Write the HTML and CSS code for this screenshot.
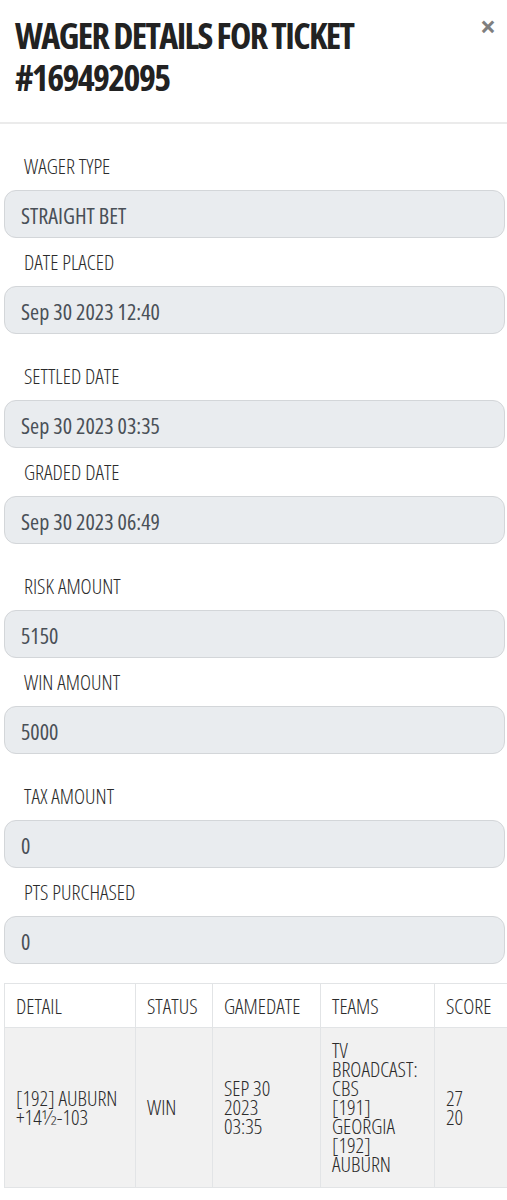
FILE: index.html
```html
<!DOCTYPE html>
<html lang="en">
<head>
    <meta charset="UTF-8">
    <meta name="viewport" content="width=device-width, initial-scale=1.0">
    <title>Wager Details</title>
    <link rel="stylesheet" href="styles.css">
</head>
<body>
    <div class="modal">
        <div class="modal-header">
            <h4 class="modal-title">WAGER DETAILS FOR TICKET<br>#169492095</h4>
            <button class="close" type="button">&times;</button>
        </div>

        <div class="modal-body">
            <div class="group">
                <label class="field-label">WAGER TYPE</label>
                <div class="form-control">STRAIGHT BET</div>
                <label class="field-label">DATE PLACED</label>
                <div class="form-control">Sep 30 2023 12:40</div>
            </div>
            <div class="group">
                <label class="field-label">SETTLED DATE</label>
                <div class="form-control">Sep 30 2023 03:35</div>
                <label class="field-label">GRADED DATE</label>
                <div class="form-control">Sep 30 2023 06:49</div>
            </div>
            <div class="group">
                <label class="field-label">RISK AMOUNT</label>
                <div class="form-control">5150</div>
                <label class="field-label">WIN AMOUNT</label>
                <div class="form-control">5000</div>
            </div>
            <div class="group">
                <label class="field-label">TAX AMOUNT</label>
                <div class="form-control">0</div>
                <label class="field-label">PTS PURCHASED</label>
                <div class="form-control">0</div>
            </div>

            <table class="wager-table">
                <colgroup>
                    <col class="col-detail">
                    <col class="col-status">
                    <col class="col-date">
                    <col class="col-teams">
                    <col class="col-score">
                </colgroup>
                <thead>
                    <tr>
                        <th>DETAIL</th>
                        <th>STATUS</th>
                        <th>GAMEDATE</th>
                        <th>TEAMS</th>
                        <th>SCORE</th>
                    </tr>
                </thead>
                <tbody>
                    <tr>
                        <td>[192] AUBURN<br>+14½-103</td>
                        <td>WIN</td>
                        <td>SEP 30<br>2023<br>03:35</td>
                        <td>TV<br>BROADCAST:<br>CBS<br>[191]<br>GEORGIA<br>[192]<br>AUBURN</td>
                        <td>27<br>20</td>
                    </tr>
                </tbody>
            </table>
        </div>
    </div>
</body>
</html>
```

FILE: styles.css
```css
* {
    box-sizing: border-box;
}

body {
    margin: 0;
    background: #fff;
    color: #333;
    font-family: "Open Sans", "Roboto", sans-serif;
    font-stretch: 75%;
    overflow-x: hidden;
}

/* Cabecera */
.modal-header {
    display: flex;
    justify-content: space-between;
    align-items: flex-start;
    padding: 15px 11px 23px 15px;
    border-bottom: 2px solid #ebebeb;
}

.modal-title {
    margin: 0;
    font-size: 36px;
    font-weight: 700;
    line-height: 42px;
    letter-spacing: -1.6px;
    color: #222;
}

.close {
    margin-top: 1px;
    padding: 0;
    border: none;
    background: none;
    font-family: inherit;
    font-stretch: 100%;
    font-size: 28px;
    font-weight: 700;
    line-height: 20px;
    color: #7f7f7f;
}

/* Campos */
.modal-body {
    padding: 18px 2px 40px 4px;
}

.group {
    margin-bottom: 30px;
}

.group:last-of-type {
    margin-bottom: 19px;
}

.field-label {
    display: block;
    margin: 12px 0 12px 20px;
    font-size: 21px;
    font-weight: 300;
    line-height: 24px;
    color: #2b2b2b;
}

.form-control {
    display: flex;
    align-items: center;
    height: 48px;
    padding: 2px 16px 0;
    background: #e9ecef;
    border: 1px solid #d3d6d9;
    border-radius: 12px;
    font-size: 22px;
    color: #495057;
}

/* Tabla */
.wager-table {
    width: 510px;
    table-layout: fixed;
    border-collapse: collapse;
    font-size: 21px;
    font-weight: 300;
    color: #2b2b2b;
}

.col-detail { width: 131px; }
.col-status { width: 77px; }
.col-date { width: 108px; }
.col-teams { width: 114px; }
.col-score { width: 80px; }

.wager-table th,
.wager-table td {
    border: 1px solid #e2e4e6;
    padding: 13px 11px;
    text-align: left;
    vertical-align: middle;
    white-space: nowrap;
}

.wager-table th {
    height: 44px;
    padding-top: 0;
    padding-bottom: 0;
    font-weight: 300;
    background: #fff;
}

.wager-table td {
    font-size: 21px;
    line-height: 19px;
    background: #f1f1f1;
}
```
